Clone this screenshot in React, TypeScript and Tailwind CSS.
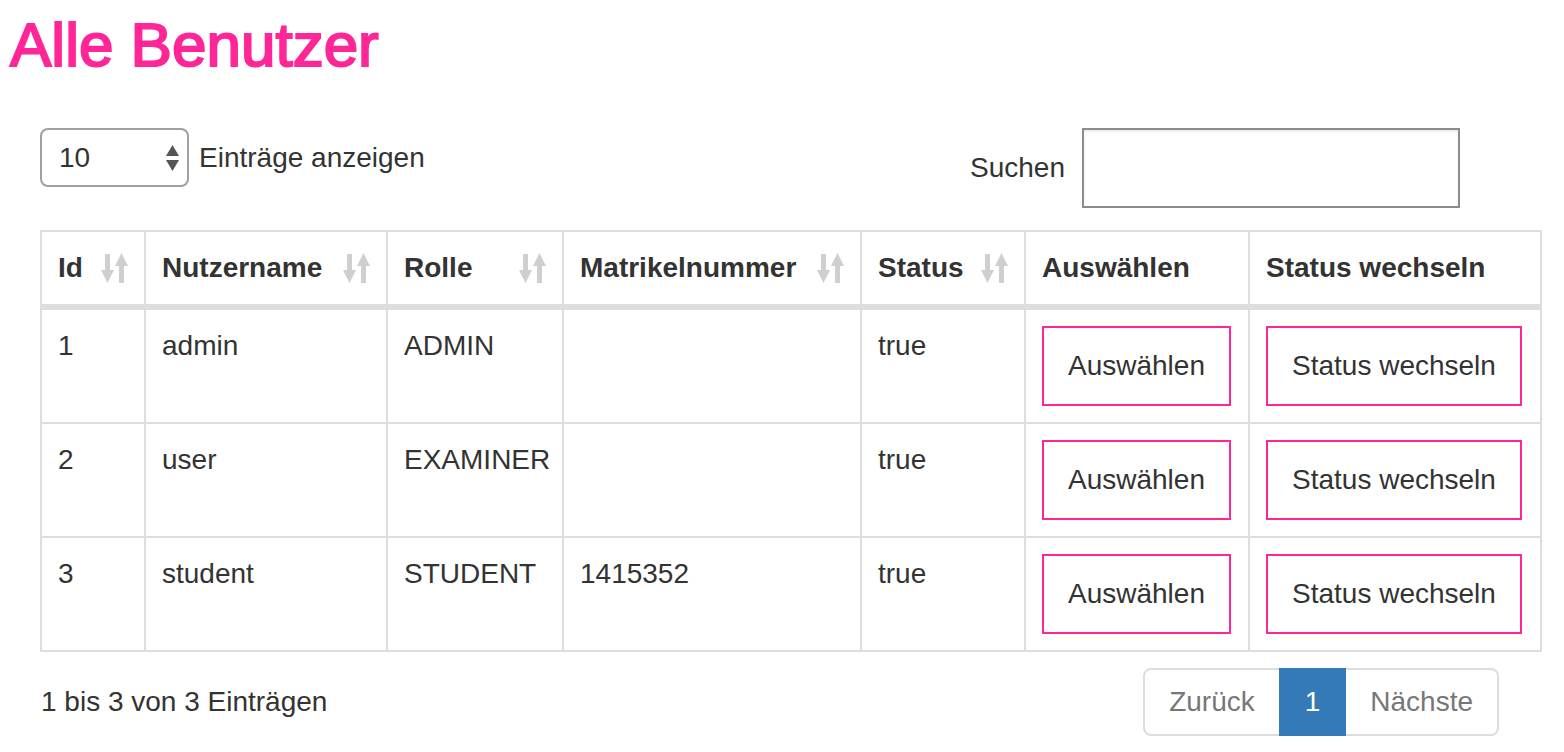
import React from "react";

const users = [
  { id: 1, name: "admin", role: "ADMIN", matrikel: "", status: "true" },
  { id: 2, name: "user", role: "EXAMINER", matrikel: "", status: "true" },
  { id: 3, name: "student", role: "STUDENT", matrikel: "1415352", status: "true" },
];

function SortIcon() {
  return (
    <svg width="27" height="30" viewBox="0 0 27 30" className="shrink-0">
      <rect x="4" y="1" width="5" height="19" fill="#cfcfcf" />
      <polygon points="0,17 13,17 6.5,30" fill="#cfcfcf" />
      <polygon points="14,13 27,13 20.5,0" fill="#cfcfcf" />
      <rect x="18" y="10" width="5" height="20" fill="#cfcfcf" />
    </svg>
  );
}

function SortHeader({ label }: { label: string }) {
  return (
    <th className="border-2 border-b-[6px] border-[#ddd] px-4 py-4 text-left align-top font-bold">
      <div className="flex items-center justify-between gap-4">
        <span>{label}</span>
        <SortIcon />
      </div>
    </th>
  );
}

export default function App() {
  return (
    <div className="min-h-screen bg-white font-['Liberation_Sans',Arial,sans-serif] text-[28px] leading-[40px] text-[#333]">
      {/* Title */}
      <h1 className="mt-[10px] px-[10px] text-[62px] font-normal leading-[69px] text-[#ff2697] [-webkit-text-stroke:2px_#ff2697]">
        Alle Benutzer
      </h1>

      <div className="ml-[40px] mt-[49px] w-[1500px]">
        {/* Controls */}
        <div className="flex items-start">
          <div className="flex items-center gap-[10px]">
            <div className="flex h-[59px] w-[149px] items-center justify-between rounded-[8px] border-2 border-[#a0a0a0] pl-[17px] pr-[8px]">
              <span>10</span>
              <div className="flex flex-col items-center gap-[4px]">
                <svg width="13" height="11" viewBox="0 0 13 11">
                  <polygon points="0,11 13,11 6.5,0" fill="#555" />
                </svg>
                <svg width="13" height="11" viewBox="0 0 13 11">
                  <polygon points="0,0 13,0 6.5,11" fill="#555" />
                </svg>
              </div>
            </div>
            <span>Einträge anzeigen</span>
          </div>
          <div className="ml-auto mr-[80px] flex items-center gap-[17px]">
            <label>Suchen</label>
            <input
              type="text"
              className="h-[80px] w-[378px] border-2 border-[#8c8c8c] shadow-[inset_0_2px_2px_rgba(0,0,0,0.08)] outline-none"
            />
          </div>
        </div>

        {/* Table */}
        <table className="mt-[22px] w-[1500px] table-fixed border-collapse">
          <colgroup>
            <col className="w-[104px]" />
            <col className="w-[242px]" />
            <col className="w-[176px]" />
            <col className="w-[298px]" />
            <col className="w-[164px]" />
            <col className="w-[224px]" />
            <col className="w-[292px]" />
          </colgroup>
          <thead>
            <tr>
              <SortHeader label="Id" />
              <SortHeader label="Nutzername" />
              <SortHeader label="Rolle" />
              <SortHeader label="Matrikelnummer" />
              <SortHeader label="Status" />
              <th className="border-2 border-b-[6px] border-[#ddd] px-4 py-4 text-left align-top font-bold">
                Auswählen
              </th>
              <th className="border-2 border-b-[6px] border-[#ddd] px-4 py-4 text-left align-top font-bold">
                Status wechseln
              </th>
            </tr>
          </thead>
          <tbody>
            {users.map((u) => (
              <tr key={u.id}>
                <td className="border-2 border-[#ddd] p-4 align-top">{u.id}</td>
                <td className="border-2 border-[#ddd] p-4 align-top">{u.name}</td>
                <td className="border-2 border-[#ddd] p-4 align-top">{u.role}</td>
                <td className="border-2 border-[#ddd] p-4 align-top">{u.matrikel}</td>
                <td className="border-2 border-[#ddd] p-4 align-top">{u.status}</td>
                <td className="border-2 border-[#ddd] p-4 align-top">
                  <button className="h-[80px] border-2 border-[#ff2697] bg-white px-[24px] text-[#333]">
                    Auswählen
                  </button>
                </td>
                <td className="border-2 border-[#ddd] p-4 align-top">
                  <button className="h-[80px] border-2 border-[#ff2697] bg-white px-[24px] text-[#333]">
                    Status wechseln
                  </button>
                </td>
              </tr>
            ))}
          </tbody>
        </table>

        {/* Footer */}
        <div className="mt-[16px] flex items-center">
          <div className="pl-[1px]">1 bis 3 von 3 Einträgen</div>
          <div className="ml-auto mr-[41px] flex">
            <span className="rounded-l-[8px] border-2 border-[#ddd] px-[24px] py-[12px] text-[#777]">Zurück</span>
            <span className="relative z-10 -ml-[2px] border-2 border-[#337ab7] bg-[#337ab7] px-[24px] py-[12px] text-white">
              1
            </span>
            <span className="-ml-[2px] rounded-r-[8px] border-2 border-[#ddd] px-[24px] py-[12px] text-[#777]">Nächste</span>
          </div>
        </div>
      </div>
    </div>
  );
}
